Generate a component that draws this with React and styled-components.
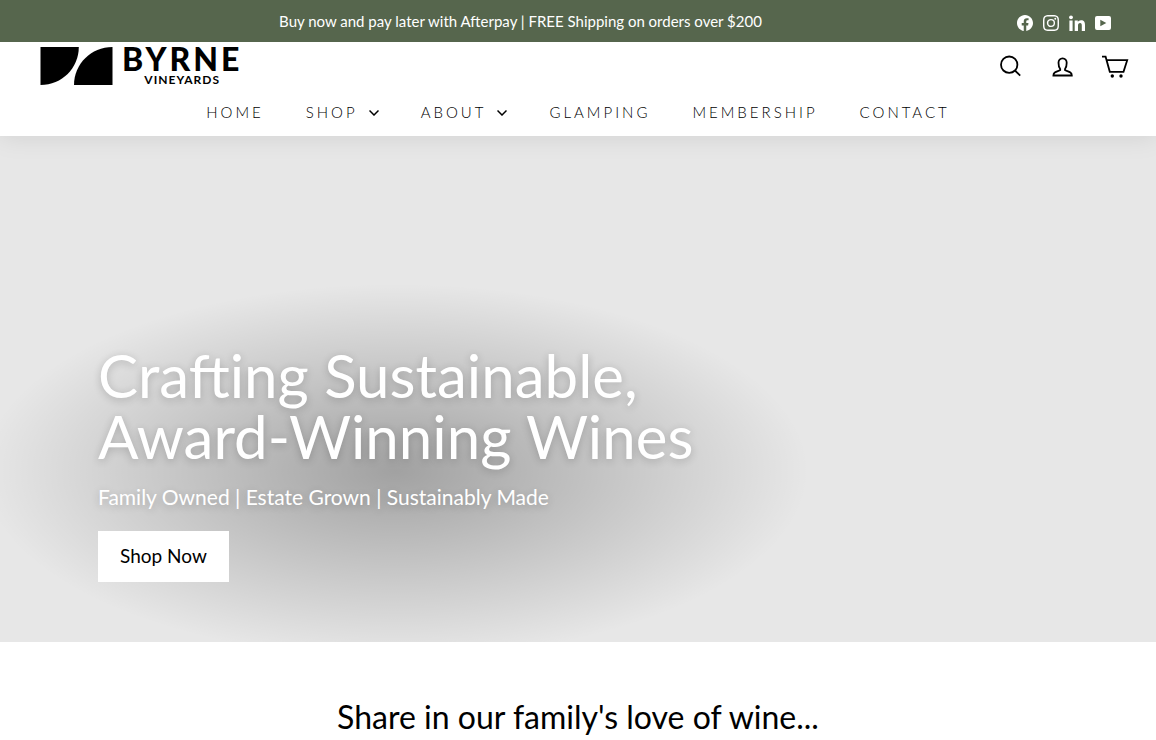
import React from 'react'
import styled, { createGlobalStyle } from 'styled-components'
import { BsFacebook, BsInstagram } from 'react-icons/bs'

const color = {
  green: '#56664d',
  black: '#000',
  white: '#fff',
  hero: '#e7e7e7'
}

const GlobalStyle = createGlobalStyle`
  *, *::before, *::after {
    box-sizing: border-box;
  }
  body {
    margin: 0;
    background: ${color.white};
    color: ${color.black};
    font-family: Lato, "Liberation Sans", sans-serif;
  }
  h1, h2, p, ul {
    margin: 0;
    padding: 0;
    font-weight: 400;
  }
  ul {
    list-style: none;
  }
  a {
    color: inherit;
    text-decoration: none;
  }
  svg {
    display: block;
  }
`

const Announcement = styled.div`
  position: relative;
  z-index: 2;
  display: flex;
  align-items: center;
  min-height: 42px;
  padding: 0 40px;
  background: ${color.green};
  color: ${color.white};
`

const AnnouncementText = styled.p`
  flex: 1;
  font-size: 15px;
  line-height: 20px;
  text-align: center;
`

const SocialList = styled.ul`
  display: flex;
  gap: 10px;
  padding: 4px 5px 0 16px;
`

const Header = styled.header`
  position: relative;
  z-index: 1;
  background: ${color.white};
  box-shadow: 0 0 25px rgba(0, 0, 0, 0.1);
`

const HeaderTop = styled.div`
  display: flex;
  align-items: center;
  justify-content: space-between;
  padding: 5px 27px 0 40px;
`

const Logo = styled.a`
  display: flex;
  gap: 9px;
  height: 38px;
`

const LogoText = styled.span`
  display: flex;
  flex-direction: column;
  align-items: center;
`

const LogoName = styled.span`
  font-size: 32px;
  font-weight: 900;
  line-height: 23px;
  letter-spacing: 3px;
`

const LogoSub = styled.span`
  font-size: 12px;
  font-weight: 700;
  line-height: 20px;
  letter-spacing: 1px;
`

const Tools = styled.div`
  display: flex;
  gap: 24px;
`

const ToolButton = styled.button`
  padding: 0;
  border: 0;
  background: none;
  color: inherit;
  cursor: pointer;
  svg {
    fill: none;
    stroke: currentColor;
    stroke-width: 1.8;
  }
`

const NavList = styled.ul`
  display: flex;
  flex-wrap: wrap;
  justify-content: center;
  column-gap: 42px;
  padding: 15px 20px 12px;
`

const NavLink = styled.a`
  display: flex;
  align-items: center;
  gap: 11px;
  font-size: 15px;
  font-weight: 300;
  line-height: 24px;
  letter-spacing: 3px;
  text-transform: uppercase;
`

const Hero = styled.section`
  display: flex;
  align-items: flex-end;
  min-height: 506px;
  padding: 60px 98px;
  background: ${color.hero};
  overflow: hidden;
`

const HeroContent = styled.div`
  position: relative;
  color: ${color.white};
  &::before {
    content: '';
    position: absolute;
    inset: -95px -190px -110px;
    background: radial-gradient(rgba(0, 0, 0, 0.3) 0%, transparent 60%);
  }
  > * {
    position: relative;
  }
`

const HeroTitle = styled.h1`
  font-size: 60px;
  line-height: 61px;
  text-shadow: 0 2px 8px rgba(0, 0, 0, 0.2);
`

const HeroText = styled.p`
  margin: 17px 0 21px;
  font-size: 21px;
  line-height: 26px;
  text-shadow: 0 2px 8px rgba(0, 0, 0, 0.2);
`

const HeroButton = styled.a`
  display: inline-block;
  padding: 12px 22px 14px;
  background: ${color.white};
  color: ${color.black};
  font-size: 19px;
  line-height: 25px;
`

const Intro = styled.section`
  padding: 56px 40px 0;
  text-align: center;
`

const IntroTitle = styled.h2`
  font-size: 32px;
  line-height: 38px;
`

const LinkedinIcon = () => (
  <svg width="16" height="16" viewBox="0 0 16 16" fill="currentColor" aria-hidden="true">
    <circle cx="2" cy="2.300" r="1.900" />
    <path d="M.4 5.600h3.200V16H.4zM5.700 5.600h3.100V7c.6-1 1.700-1.700 3.200-1.700 3.100 0 4 1.900 4 4.700v6h-3.200v-5.300c0-1.500-.3-2.600-1.700-2.600-1.500 0-2.100 1.100-2.100 2.600V16H5.700z" />
  </svg>
)

const YoutubeIcon = () => (
  <svg width="16" height="16" viewBox="0 0 16 16" fill="currentColor" aria-hidden="true">
    <path
      fillRule="evenodd"
      d="M2 1h12a2 2 0 0 1 2 2v10a2 2 0 0 1-2 2H2a2 2 0 0 1-2-2V3a2 2 0 0 1 2-2zM5.300 4.700v6.600L11.300 8z"
    />
  </svg>
)

const SearchIcon = () => (
  <svg width="28" height="28" viewBox="0 0 28 28" aria-hidden="true">
    <circle cx="12.200" cy="12.700" r="8.200" />
    <path d="M18 18.500l5.200 5.200" />
  </svg>
)

const UserIcon = () => (
  <svg width="28" height="28" viewBox="0 0 28 28" aria-hidden="true">
    <path d="M11.200 17C9.900 15.600 9.500 13 9.500 10.800C9.500 8.200 11.200 6.300 13.600 6.300s4.100 1.900 4.100 4.500c0 2.200-.4 4.800-1.700 6.200v1c1 .9 3.700 1.200 5.400 2.400 1 .7 1.400 1.900 1.400 3.100H4.400c0-1.200.4-2.400 1.400-3.100 1.700-1.200 4.400-1.500 5.400-2.400z" />
  </svg>
)

const CartIcon = () => (
  <svg width="28" height="28" viewBox="0 0 28 28" aria-hidden="true">
    <path d="M1 4.700h3.600l4.200 15.100h13.700l3.700-11.600H5.600" />
    <circle cx="11.300" cy="24" r="1.700" fill="currentColor" stroke="none" />
    <circle cx="20" cy="24" r="1.700" fill="currentColor" stroke="none" />
  </svg>
)

const ChevronIcon = () => (
  <svg width="10" height="8" viewBox="0 0 10 8" fill="none" stroke="currentColor" strokeWidth="1.500" aria-hidden="true">
    <path d="M.5 2.500L5 7 9.500 2.500" />
  </svg>
)

const LogoMark = () => (
  <svg width="73" height="38" viewBox="0 0 73 38" aria-hidden="true">
    <path d="M.5 0h38.300C38.800 21 22 38 .5 38z" />
    <path d="M72.500 0v38H34C34 17 51 0 72.500 0z" />
  </svg>
)

const socials = [
  { label: 'Facebook', icon: <BsFacebook size={16} /> },
  { label: 'Instagram', icon: <BsInstagram size={16} /> },
  { label: 'LinkedIn', icon: <LinkedinIcon /> },
  { label: 'YouTube', icon: <YoutubeIcon /> }
]

const tools = [
  { label: 'Search', icon: <SearchIcon /> },
  { label: 'Account', icon: <UserIcon /> },
  { label: 'Cart', icon: <CartIcon /> }
]

const menu = [
  { label: 'Home' },
  { label: 'Shop', dropdown: true },
  { label: 'About', dropdown: true },
  { label: 'Glamping' },
  { label: 'Membership' },
  { label: 'Contact' }
]

const App = () => (
  <>
    <GlobalStyle />
    <Announcement>
      <AnnouncementText>
        Buy now and pay later with Afterpay | FREE Shipping on orders over $200
      </AnnouncementText>
      <SocialList>
        {socials.map(({ label, icon }) => (
          <li key={label}>
            <a href="#" aria-label={label}>{icon}</a>
          </li>
        ))}
      </SocialList>
    </Announcement>
    <Header>
      <HeaderTop>
        <Logo href="#">
          <LogoMark />
          <LogoText>
            <LogoName>BYRNE</LogoName>
            <LogoSub>VINEYARDS</LogoSub>
          </LogoText>
        </Logo>
        <Tools>
          {tools.map(({ label, icon }) => (
            <ToolButton key={label} type="button" aria-label={label}>{icon}</ToolButton>
          ))}
        </Tools>
      </HeaderTop>
      <nav>
        <NavList>
          {menu.map(({ label, dropdown }) => (
            <li key={label}>
              <NavLink href="#">
                {label}
                {dropdown && <ChevronIcon />}
              </NavLink>
            </li>
          ))}
        </NavList>
      </nav>
    </Header>
    <main>
      <Hero>
        <HeroContent>
          <HeroTitle>
            Crafting Sustainable,<br />Award-Winning Wines
          </HeroTitle>
          <HeroText>Family Owned | Estate Grown | Sustainably Made</HeroText>
          <HeroButton href="#">Shop Now</HeroButton>
        </HeroContent>
      </Hero>
      <Intro>
        <IntroTitle>Share in our family's love of wine...</IntroTitle>
      </Intro>
    </main>
  </>
)

export default App
